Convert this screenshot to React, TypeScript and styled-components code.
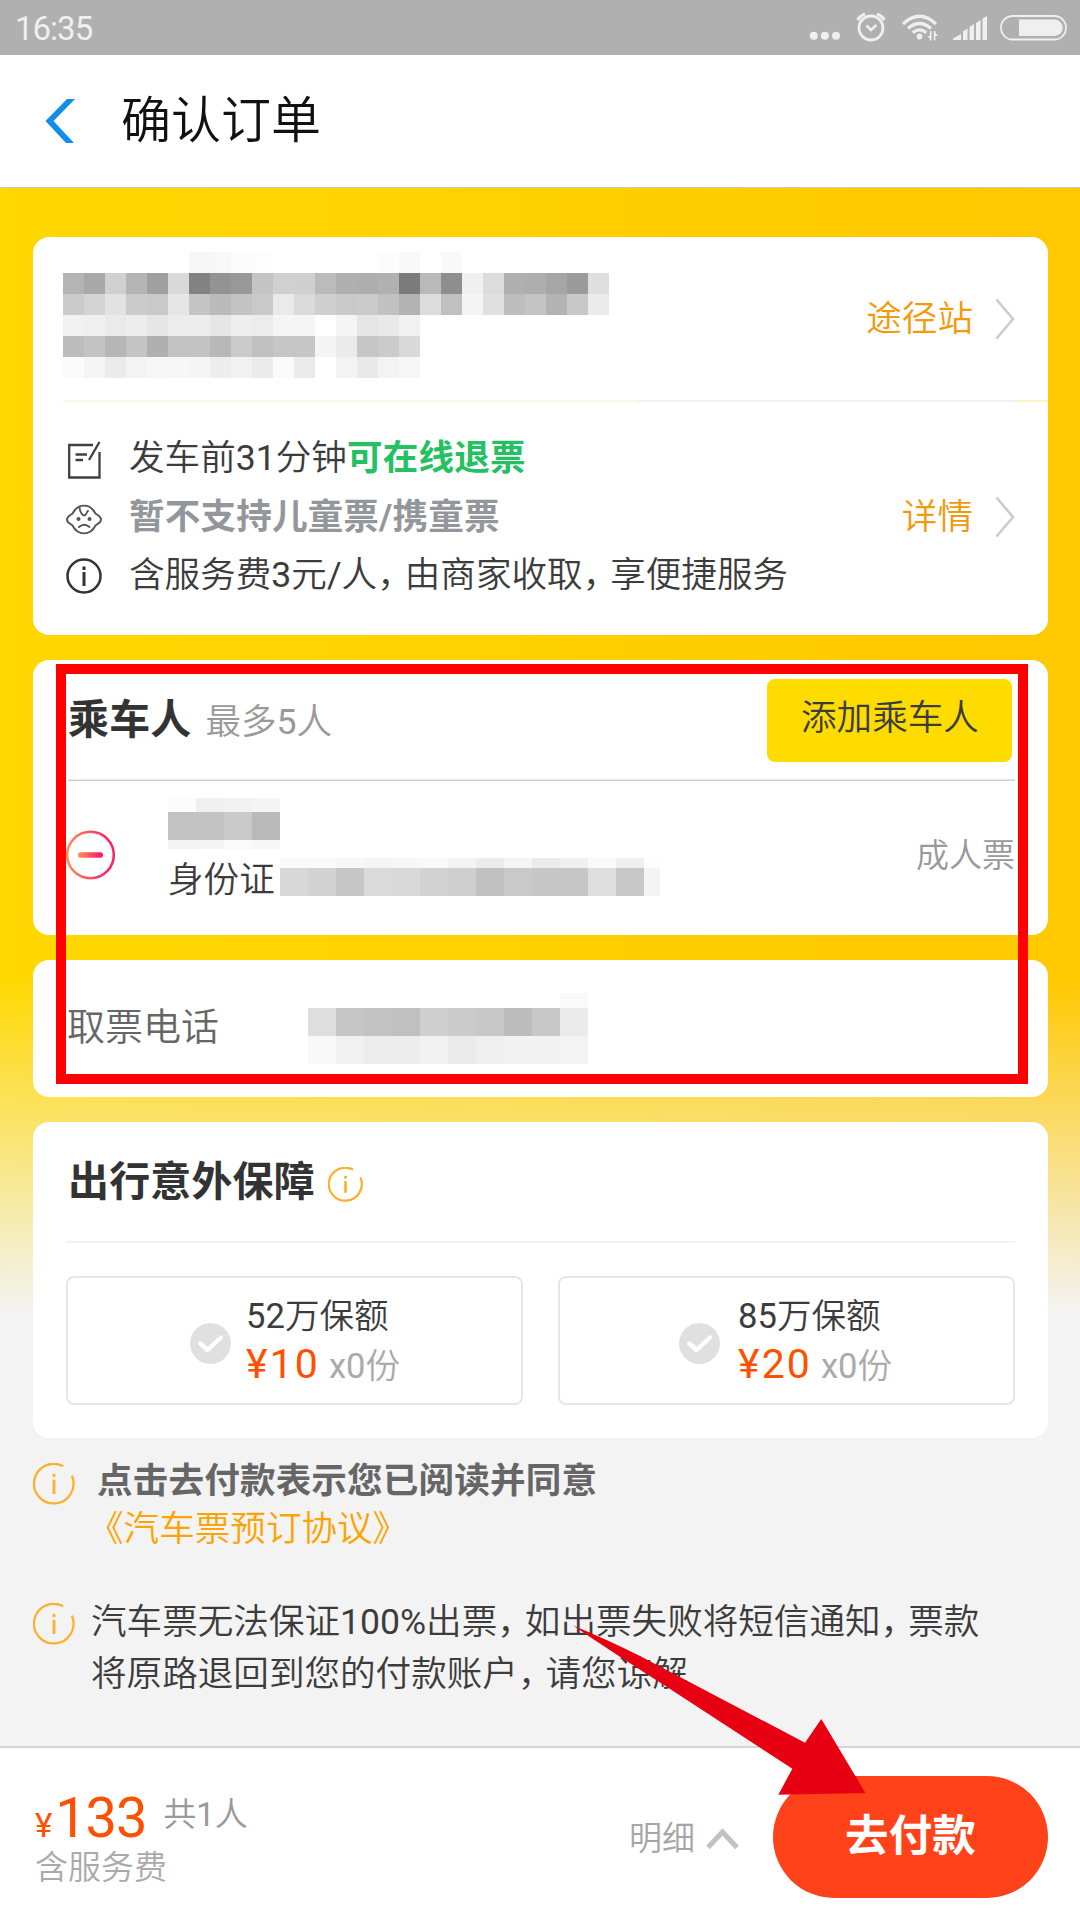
import React from 'react';
import styled, { createGlobalStyle } from 'styled-components';

const GlobalStyle = createGlobalStyle`
  *, *::before, *::after { box-sizing: border-box; }
  body {
    margin: 0;
    background: #f3f3f3;
    font-family: Roboto, "Noto Sans CJK SC", sans-serif;
    color: #3c3c3c;
  }
  svg { display: block; flex: none; }
`;

const Page = styled.div`
  position: relative;
  display: flex;
  flex-direction: column;
  width: 1080px;
  height: 1920px;
  overflow: hidden;
  background: #f3f3f3;
`;

const Text = styled.span<{ $size?: number; $color?: string; $bold?: boolean; $line?: number }>`
  display: block;
  font-size: ${p => p.$size ?? 35.6}px;
  line-height: ${p => p.$line ?? 48}px;
  font-weight: ${p => (p.$bold ? 700 : 350)};
  color: ${p => p.$color ?? '#3c3c3c'};
  letter-spacing: ${p => (p.$bold ? 0.15 : 0)}px;
  white-space: nowrap;
`;

const Num = styled.span`
  font-weight: 400;
`;

const Refundable = styled.b`
  font-weight: 700;
  letter-spacing: 0.2px;
  color: #24c062;
`;

const Comma = styled.span`
  letter-spacing: -8px;
`;

const StatusBar = styled.header`
  display: flex;
  flex: none;
  align-items: center;
  justify-content: space-between;
  height: 55px;
  padding: 3px 12px 0 15px;
  background: #b0b0b0;
`;

const Clock = styled.span`
  font-size: 33px;
  line-height: 40px;
  letter-spacing: -1px;
  color: #efefef;
`;

const TitleBar = styled.div`
  display: flex;
  flex: none;
  align-items: center;
  gap: 45px;
  height: 133px;
  border-bottom: 1px solid #c9c9c4;
  padding-left: 45px;
  background: #fff;
`;

const Content = styled.main`
  display: flex;
  flex: none;
  flex-direction: column;
  height: 1558px;
  padding: 49px 32px 0 33px;
  background:
    linear-gradient(180deg, rgba(243, 243, 243, 0) 790px, #f3f3f3 1125px),
    linear-gradient(90deg, #ffd800, #ffc800);
`;

const Card = styled.section<{ $height: number }>`
  display: flex;
  flex: none;
  flex-direction: column;
  height: ${p => p.$height}px;
  margin-bottom: 25px;
  border-radius: 16px;
  background: #fff;
`;

const TripRow = styled.div`
  display: flex;
  align-items: center;
  justify-content: space-between;
  height: 163px;
  padding: 0 33px 0 30px;
`;

const TripDivider = styled.div`
  height: 3px;
  margin-left: 30px;
  background:
    linear-gradient(#fbf9ee, #fbf9ee) left / 574px 3px no-repeat,
    linear-gradient(90deg, #f1f1ee 378px, #fff3c4 378px) right top / 411px 2px no-repeat;
`;

const NoticeRow = styled.div`
  display: flex;
  align-items: flex-start;
  justify-content: space-between;
  padding: 26px 33px 0 33px;
`;

const NoticeList = styled.ul`
  display: flex;
  flex-direction: column;
  margin: 0;
  padding: 0;
  list-style: none;
`;

const Notice = styled.li`
  display: flex;
  align-items: center;
  gap: 27px;
  height: 58.5px;
`;

const NoticeIcon = styled.div<{ $drop: number }>`
  padding-top: ${p => p.$drop * 2}px;
`;

const LinkGroup = styled.div<{ $top?: number }>`
  display: flex;
  align-items: center;
  gap: 22px;
  margin-top: ${p => p.$top ?? 0}px;
`;

const Mosaic = styled.div<{ $columns: string; $rows: string; $top?: number }>`
  display: grid;
  flex: none;
  grid-template-columns: ${p => p.$columns};
  grid-template-rows: ${p => p.$rows};
  margin-top: ${p => p.$top ?? 0}px;
`;

const Tile = styled.i`
  display: block;
`;

const PassengerHead = styled.div`
  display: flex;
  align-items: center;
  height: 119px;
  padding: 0 36px 0 35px;
`;

const Limit = styled.div`
  margin: 4px 0 0 14px;
`;

const AddButton = styled.button`
  width: 245px;
  height: 83px;
  margin: 1px 0 0 auto;
  padding: 0 0 5px 1px;
  border: 0;
  border-radius: 8px;
  background: #ffdc00;
  font-family: inherit;
`;

const Divider = styled.div<{ $color: string; $left: number }>`
  flex: none;
  height: 2px;
  margin: 0 33px 0 ${p => p.$left}px;
  background: ${p => p.$color};
`;

const PassengerRow = styled.div`
  display: flex;
  align-items: flex-start;
  height: 154px;
  padding: 17px 33px 0 33px;
`;

const RemoveSlot = styled.div`
  margin-top: 32px;
`;

const PassengerInfo = styled.div`
  display: flex;
  flex-direction: column;
  margin-left: 52px;
`;

const TicketType = styled.div`
  margin: 34px 0 0 auto;
`;

const IdRow = styled.div`
  display: flex;
  align-items: flex-start;
  gap: 5px;
  margin-top: 7px;
`;

const PhoneRow = styled.div`
  display: flex;
  align-items: center;
  height: 137px;
  padding-left: 34px;
`;

const PhoneLabel = styled.div`
  width: 241px;
  padding-bottom: 4px;
`;

const InsuranceHead = styled.div`
  display: flex;
  align-items: center;
  gap: 13px;
  height: 119px;
  padding-left: 35px;
`;

const PlanRow = styled.div`
  display: flex;
  justify-content: space-between;
  padding: 33px 33px 0 33px;
`;

const Plan = styled.div<{ $left: number; $gap: number }>`
  display: flex;
  align-items: center;
  gap: ${p => p.$gap}px;
  width: 457px;
  height: 129px;
  padding-left: ${p => p.$left}px;
  border: 2px solid #e6e6e6;
  border-radius: 8px;
`;

const CheckSlot = styled.div`
  padding-top: 5px;
`;

const PlanText = styled.div`
  display: flex;
  flex-direction: column;
  padding-top: 1px;
`;

const PriceLine = styled.div`
  display: flex;
  align-items: baseline;
  gap: 9px;
`;

const Price = styled.span`
  font-size: 41px;
  line-height: 48px;
  color: #ff5000;
  letter-spacing: 2.1px;
`;

const Agreement = styled.div`
  display: flex;
  align-items: flex-start;
  gap: 22px;
  margin-top: -7px;
`;

const AgreementText = styled.div`
  display: flex;
  flex-direction: column;
  margin-top: 1px;
`;

const Protocol = styled.div`
  margin-left: -9px;
`;

const Disclaimer = styled.div`
  display: flex;
  align-items: flex-start;
  gap: 16px;
  margin-top: 43px;
`;

const RingSlot = styled.div<{ $top: number }>`
  margin-top: ${p => p.$top}px;
`;

const Footer = styled.footer`
  display: flex;
  flex: 1;
  align-items: center;
  padding: 6px 32px 0 35px;
  border-top: 2px solid #d4d4d4;
  background: #fff;
`;

const Total = styled.div`
  display: flex;
  flex-direction: column;
  gap: -2px;
`;

const TotalLine = styled.div`
  display: flex;
  align-items: baseline;
  margin-bottom: -2px;
  padding-top: 4px;
  color: #ff5000;
`;

const Currency = styled.span`
  font-size: 33px;
`;

const Amount = styled.span`
  margin-left: 3px;
  font-size: 56px;
  line-height: 60px;
  letter-spacing: -1.200px;
`;

const Headcount = styled.div`
  position: relative;
  top: -11.500px;
  margin-left: 17px;
`;

const DetailToggle = styled.div`
  display: flex;
  align-items: center;
  gap: 11px;
  margin-left: auto;
  padding-top: 3px;
`;

const PayButton = styled.button`
  width: 275px;
  height: 122px;
  margin-left: 34px;
  padding: 0;
  border: 0;
  border-radius: 61px;
  background: #ff421a;
  font-family: inherit;
`;

const Highlight = styled.div`
  position: absolute;
  left: 56px;
  top: 664px;
  width: 972px;
  height: 420px;
  border: 10px solid #f00;
`;

const PointerLayer = styled.div`
  position: absolute;
  left: 570px;
  top: 1620px;
`;

const tripTiles = [
  '.. .. .. .. .. .. f6 f8 fc fd .. .. .. .. .. fc f8 .. f9 .. .. .. .. .. .. ..',
  'b4 a9 d0 b4 a0 d9 82 93 98 c4 d0 cf bb b0 ae b1 7b b9 8e f0 dc b0 ae a6 9b df',
  'cb d4 e2 cb c9 e6 c4 ba c3 ca ea da cf c9 cb c1 b3 dc c0 f4 e0 be c4 b3 c8 eb',
  'f1 ef ea ed e6 ec ed e6 ee ec f5 f5 .. f5 e5 e9 f1 .. .. .. .. .. .. .. .. ..',
  'bc c3 b7 c4 b0 c2 c3 b8 cb c0 c6 c6 f4 eb c6 cb d9 .. .. .. .. .. .. .. .. ..',
  'fb f5 eb f3 f6 f7 f5 ed f1 eb fa eb .. f3 e9 f3 f7 .. .. .. .. .. .. .. .. ..',
];
const nameTiles = ['fc ef f2 f4', 'c2 c2 c9 ba', 'f4 f3 fa f7'];
const idTiles = [
  'fa fa f7 f4 f7 f9 f3 ec f5 eb f0 f9 ef fd',
  'd8 d3 c6 da d9 d2 cf c1 c9 c6 c6 de c7 f4',
];
const phoneTiles = [
  '.. .. .. .. .. .. .. .. .. fa',
  'de c6 c3 c0 cf cb c8 bc c8 ea',
  'f8 f1 ec ed f1 ea ef f2 f1 f3',
];

function Masked({ tiles, columns, rows, top }: { tiles: string[]; columns: string; rows: string; top?: number }) {
  return (
    <Mosaic $columns={columns} $rows={rows} $top={top}>
      {tiles.flatMap((row, y) =>
        row.split(' ').map((v, x) => (
          <Tile key={`${y}-${x}`} style={{ background: v === '..' ? 'transparent' : `#${v}${v}${v}` }} />
        )),
      )}
    </Mosaic>
  );
}

const Chevron = () => (
  <svg width="20" height="42" viewBox="0 0 20 42" fill="none" stroke="#cbcbcb" strokeWidth="2.6">
    <path d="M1.500 1.500 18 21 1.500 40.500" />
  </svg>
);

const InfoRing = ({ size, width }: { size: number; width: number }) => (
  <svg width={size} height={size} viewBox="0 0 42 42" fill="none" stroke="#fbb12f" strokeWidth={width}>
    <path d="M29.3 2.8A19.8 19.8 0 1 0 39.2 13.5" strokeLinecap="round" />
    <path d="M21 16.8V31M21 10.8V14" strokeWidth={width + 0.5} />
  </svg>
);

const CheckCircle = () => (
  <svg width="41" height="41" viewBox="0 0 41 41" fill="none">
    <circle cx="20.5" cy="20.5" r="20.5" fill="#e0e0e0" />
    <path d="M10.3 20.5 17.5 27 31 14.5" stroke="#fff" strokeWidth="4.4" strokeLinecap="round" strokeLinejoin="round" />
  </svg>
);

const StatusIcons = () => (
  <svg width="262" height="40" viewBox="806 9 262 40" fill="none" stroke="#efefef">
    <g fill="#efefef" stroke="none">
      <circle cx="813.8" cy="35.7" r="4" />
      <circle cx="824.9" cy="35.7" r="4" />
      <circle cx="836" cy="35.7" r="4" />
    </g>
    <circle cx="871" cy="28" r="12" strokeWidth="2.8" />
    <path d="M866.5 25.5 871 30 876.5 25" strokeWidth="2.6" />
    <path d="M857.5 20Q860 15.5 865 13.8M884.5 20Q882 15.5 877 13.8" strokeWidth="3" />
    <path d="M903 24Q919.5 8.5 936 24M908 28.5Q919.5 18.5 931 28.5M912.8 32.8Q919.5 27 926.2 32.8" strokeWidth="3.2" />
    <circle cx="919.5" cy="36.5" r="2.9" fill="#efefef" stroke="none" />
    <path d="M930.7 31V40.5M934.6 31V40.5" strokeWidth="1.6" />
    <path d="M927.5 36H930.7V40ZM938 36H934.6V32Z" fill="#efefef" stroke="none" />
    <path d="M953 40V38.5L961 34V40ZM963 40V31.5L967.5 28.5V40ZM969.5 40V27L974 24V40ZM976 40V23L980.5 20V40ZM982.5 40V18.5L987 16V40Z" fill="#efefef" stroke="none" />
    <rect x="1001" y="16" width="65" height="23.5" rx="11.75" strokeWidth="1.8" />
    <path d="M1019 19.5H1054.5A8.2 8.2 0 0 1 1054.5 36H1019Z" fill="#efefef" stroke="none" />
  </svg>
);

const EditNoteIcon = () => (
  <svg width="36" height="40" viewBox="0 0 36 40" fill="none" stroke="#404040" strokeWidth="2.3">
    <path d="M27 5H3.2V37.5H33.5V12M33.5 2 23 20M9.5 14.5H21M9.5 20H17" />
  </svg>
);

const ChildIcon = () => (
  <svg width="36" height="38" viewBox="0 0 36 38" fill="none" stroke="#555" strokeWidth="1.9">
    <path d="M6.5 13.500C12 3 24 3 29.500 13.500C31 15 35 16 35 19.500S31 24 29.500 25.500C24 36 12 36 6.500 25.500C5 24 1 23 1 19.500S5 15 6.500 13.500Z" />
    <path d="M13.5 7.500C14 13 17 15.500 18.500 15.500C21 14.500 20.500 11.500 22 11M13 27Q18 22.500 23.500 27" strokeLinecap="round" />
    <circle cx="12.5" cy="19" r="2" fill="#555" stroke="none" />
    <circle cx="23.5" cy="19" r="2" fill="#555" stroke="none" />
  </svg>
);

const InfoIcon = () => (
  <svg width="36" height="36" viewBox="0 0 36 36" fill="none" stroke="#333" strokeWidth="2.5">
    <circle cx="18" cy="18" r="16.5" />
    <path d="M18 14V28M18 8.500V12" strokeWidth="3" />
  </svg>
);

const RemoveIcon = () => (
  <svg width="50" height="50" viewBox="0 0 50 50" fill="none">
    <defs>
      <linearGradient id="remove" gradientUnits="userSpaceOnUse" x1="0" y1="0" x2="50" y2="0">
        <stop offset="0" stopColor="#ff8f58" />
        <stop offset="0.85" stopColor="#fb1f69" />
      </linearGradient>
      <linearGradient id="minus" gradientUnits="userSpaceOnUse" x1="12" y1="0" x2="38" y2="0">
        <stop offset="0" stopColor="#ff8f58" />
        <stop offset="0.85" stopColor="#fb1f69" />
      </linearGradient>
    </defs>
    <circle cx="24.5" cy="25" r="23.3" stroke="url(#remove)" strokeWidth="2.5" />
    <rect x="12" y="22.2" width="25" height="5.6" rx="2.5" fill="url(#minus)" />
  </svg>
);

const plans = [
  { amount: '52', price: '10', left: 122, gap: 15 },
  { amount: '85', price: '20', left: 119, gap: 18 },
];

export default function App() {
  return (
    <Page>
      <GlobalStyle />
      <StatusBar>
        <Clock>16:35</Clock>
        <StatusIcons />
      </StatusBar>
      <TitleBar>
        <svg width="31" height="44" viewBox="0 0 31 44">
          <path d="M22 0H30L8.5 22 29 44H21L0.5 22Z" fill="#108ee9" />
        </svg>
        <Text $size={50} $line={70} $color="#111">确认订单</Text>
      </TitleBar>

      <Content>
        <Card $height={398}>
          <TripRow>
            <Masked tiles={tripTiles} columns="repeat(26, 21px)" rows="repeat(6, 21px)" top={-7} />
            <LinkGroup>
              <Text $color="#f19a0c">途径站</Text>
              <Chevron />
            </LinkGroup>
          </TripRow>
          <TripDivider />
          <NoticeRow>
            <NoticeList>
              <Notice>
                <NoticeIcon $drop={1.5}><EditNoteIcon /></NoticeIcon>
                <Text>发车前<Num>31</Num>分钟<Refundable>可在线退票</Refundable></Text>
              </Notice>
              <Notice>
                <NoticeIcon $drop={2}><ChildIcon /></NoticeIcon>
                <Text $bold $color="#93969b">暂不支持儿童票/携童票</Text>
              </Notice>
              <Notice>
                <NoticeIcon $drop={1}><InfoIcon /></NoticeIcon>
                <Text>含服务费<Num>3</Num>元<Num>/</Num>人<Comma>，</Comma>由商家收取<Comma>，</Comma>享便捷服务</Text>
              </Notice>
            </NoticeList>
            <LinkGroup $top={64}>
              <Text $color="#f19a0c">详情</Text>
              <Chevron />
            </LinkGroup>
          </NoticeRow>
        </Card>

        <Card $height={275}>
          <PassengerHead>
            <Text $size={41} $bold $color="#333">乘车人</Text>
            <Limit><Text $color="#999">最多<Num>5</Num>人</Text></Limit>
            <AddButton><Text>添加乘车人</Text></AddButton>
          </PassengerHead>
          <Divider $left={35} $color="linear-gradient(#e8e8e8 50%, #cecece 50%)" />
          <PassengerRow>
            <RemoveSlot><RemoveIcon /></RemoveSlot>
            <PassengerInfo>
              <Masked tiles={nameTiles} columns="repeat(4, 28px)" rows="14px 28px 9px" />
              <IdRow>
                <Text>身份证</Text>
                <Masked tiles={idTiles} columns="repeat(13, 28px) 16px" rows="10px 28px" top={2} />
              </IdRow>
            </PassengerInfo>
            <TicketType><Text $size={33} $color="#999">成人票</Text></TicketType>
          </PassengerRow>
        </Card>

        <Card $height={137}>
          <PhoneRow>
            <PhoneLabel><Text $size={38} $color="#666">取票电话</Text></PhoneLabel>
            <Masked tiles={phoneTiles} columns="repeat(10, 28px)" rows="15px 28px 28px" />
          </PhoneRow>
        </Card>

        <Card $height={316}>
          <InsuranceHead>
            <Text $size={41} $bold $color="#333">出行意外保障</Text>
            <RingSlot $top={6}><InfoRing size={35} width={2.7} /></RingSlot>
          </InsuranceHead>
          <Divider $left={33} $color="#f2f2f2" />
          <PlanRow>
            {plans.map(p => (
              <Plan key={p.amount} $left={p.left} $gap={p.gap}>
                <CheckSlot><CheckCircle /></CheckSlot>
                <PlanText>
                  <Text $size={34.6}><Num>{p.amount}</Num>万保额</Text>
                  <PriceLine>
                    <Price>¥{p.price}</Price>
                    <Text $size={34.6} $color="#aaa"><Num>x0</Num>份</Text>
                  </PriceLine>
                </PlanText>
              </Plan>
            ))}
          </PlanRow>
        </Card>

        <Agreement>
          <RingSlot $top={7}><InfoRing size={42} width={2.3} /></RingSlot>
          <AgreementText>
            <Text $bold $color="#666">点击去付款表示您已阅读并同意</Text>
            <Protocol><Text $color="#fba403">《汽车票预订协议》</Text></Protocol>
          </AgreementText>
        </Agreement>
        <Disclaimer>
          <RingSlot $top={7}><InfoRing size={42} width={2.3} /></RingSlot>
          <div>
            <Text $line={52}>汽车票无法保证<Num>100%</Num>出票<Comma>，</Comma>如出票失败将短信通知<Comma>，</Comma>票款</Text>
            <Text $line={52}>将原路退回到您的付款账户<Comma>，</Comma>请您谅解</Text>
          </div>
        </Disclaimer>
      </Content>

      <Footer>
        <Total>
          <TotalLine>
            <Currency>¥</Currency>
            <Amount>133</Amount>
            <Headcount><Text $size={33} $color="#999" $line={44}>共<Num>1</Num>人</Text></Headcount>
          </TotalLine>
          <Text $size={33} $color="#aaa" $line={44}>含服务费</Text>
        </Total>
        <DetailToggle>
          <Text $size={33} $color="#a5a5a5">明细</Text>
          <svg width="33" height="22" viewBox="0 0 33 22" fill="none" stroke="#c2c2c2" strokeWidth="5">
            <path d="M2 19.5 16.5 4 31 19.5" />
          </svg>
        </DetailToggle>
        <PayButton><Text $size={43.5} $bold $color="#fff" $line={60}>去付款</Text></PayButton>
      </Footer>

      <Highlight />
      <PointerLayer>
        <svg width="300" height="180" viewBox="570 1620 300 180">
          <path d="M573 1625.5Q606 1639 640 1656L805 1742.7 821.3 1719 865.5 1793 778.3 1794.7 792.4 1768.7 667 1687Q612 1652 573 1625.5Z" fill="#e60012" />
        </svg>
      </PointerLayer>
    </Page>
  );
}
